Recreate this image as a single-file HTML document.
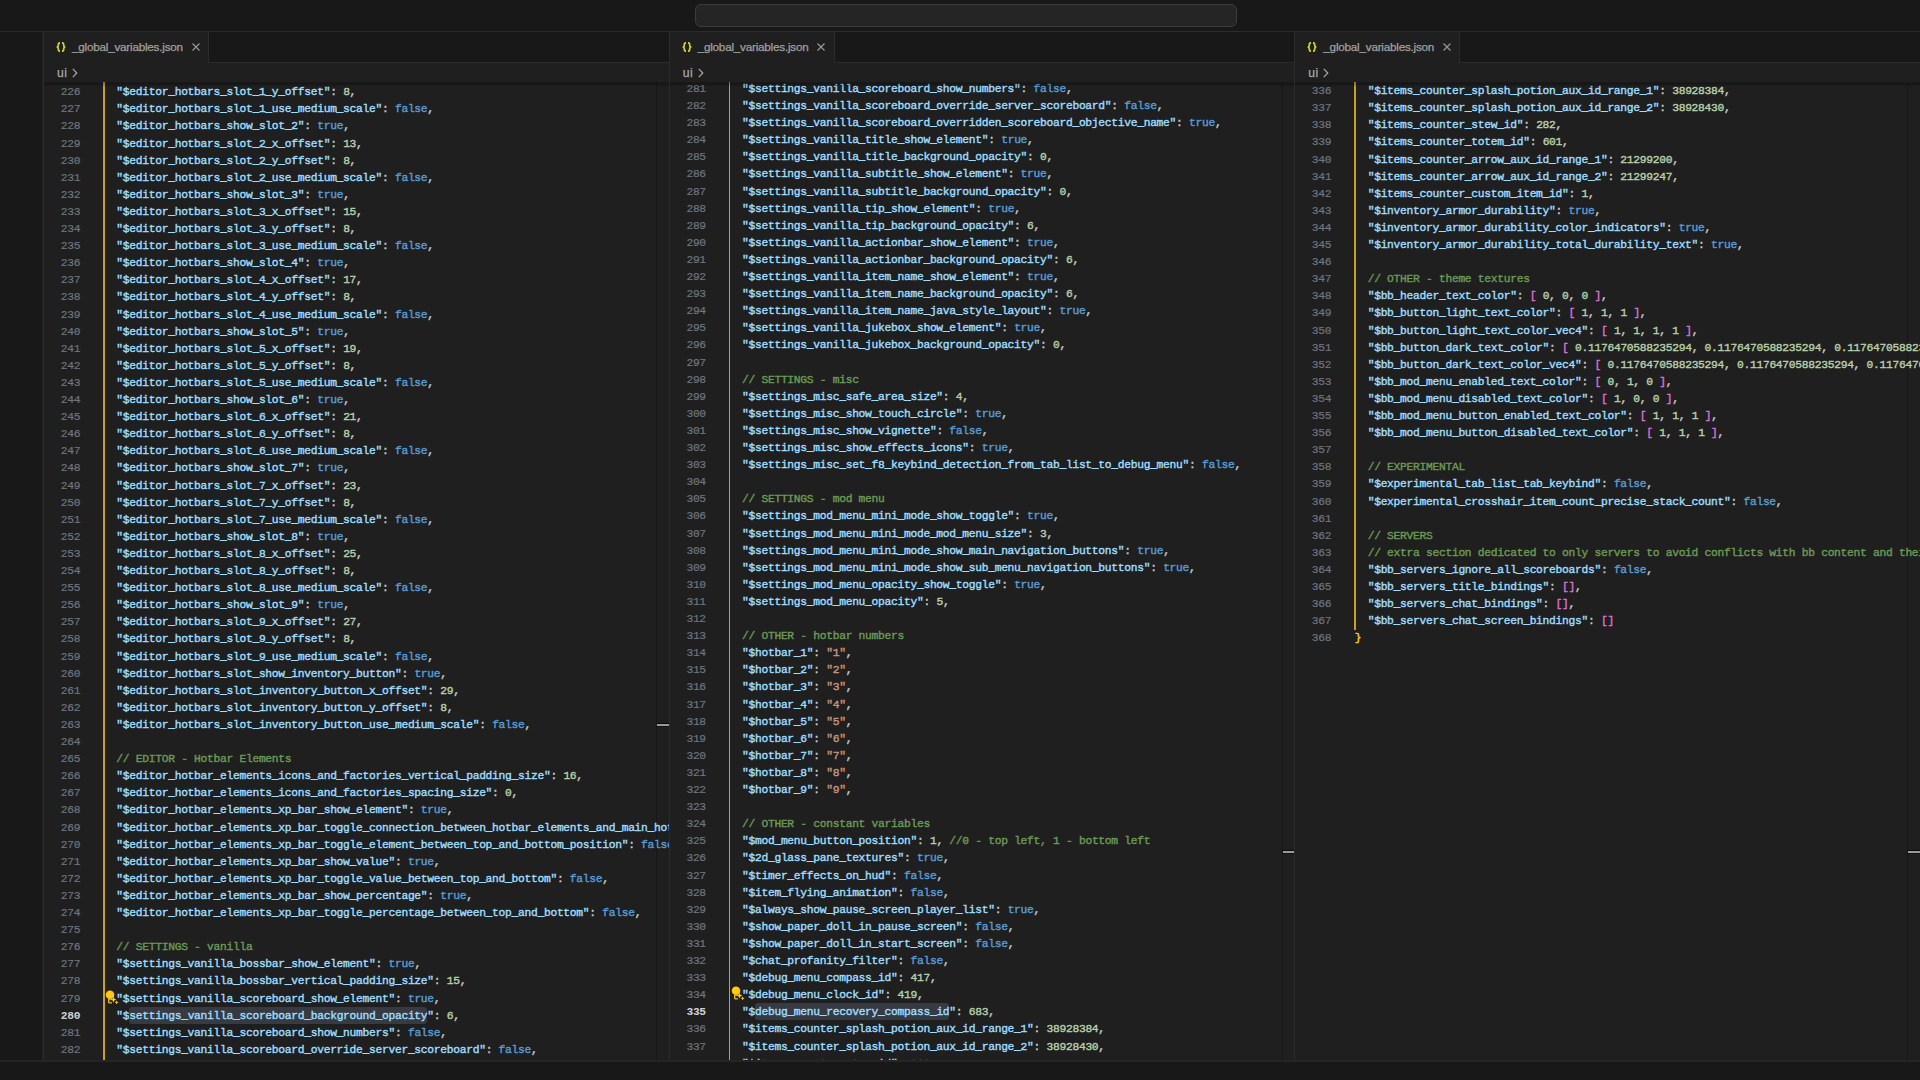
<!DOCTYPE html>
<html><head><meta charset="utf-8"><title>_global_variables.json</title>
<style>
*{margin:0;padding:0;box-sizing:border-box}
html,body{width:1920px;height:1080px;overflow:hidden;background:#181818}
body{position:relative;font-family:"Liberation Sans",sans-serif;color:#ccc}
i{font-style:normal}
.title{position:absolute;left:0;top:0;width:1920px;height:32px;background:#181818;border-bottom:1px solid #2b2b2b}
.cc{position:absolute;left:695px;top:4px;width:542px;height:23px;background:#252525;border:1px solid #3b3b3b;border-radius:6px}
.act{position:absolute;left:0;top:32px;width:43px;height:1028px;background:#181818;border-right:1px solid #222}
.status{position:absolute;left:0;top:1060px;width:1920px;height:20px;background:#181818;border-top:2px solid #252525}
.pane{position:absolute;top:32px;height:1028px;background:#1f1f1f;border-left:1px solid #2b2b2b;overflow:hidden}
.tabs{position:absolute;left:0;top:0;right:0;height:31px;background:#181818;border-bottom:1px solid #2b2b2b}
.tab{position:absolute;left:0;top:0;width:165px;height:31px;background:#1f1f1f;border-right:1px solid #2b2b2b}
.jic{position:absolute;left:12px;top:10px}
.tname{position:absolute;left:28px;top:0;height:29px;line-height:29px;font-size:11.7px;letter-spacing:-0.22px;color:#a0a0a0;-webkit-text-stroke:.25px;white-space:pre}
.xic{position:absolute;left:147.5px;top:11px}
.bc{position:absolute;left:0;top:31px;right:0;height:19px;background:#1f1f1f}
.bct{position:absolute;left:13px;top:0;height:21px;line-height:21px;letter-spacing:.5px;font-size:12.2px;color:#a9a9a9;-webkit-text-stroke:.25px}
.chev{position:absolute;left:28px;top:5px}
.ed{position:absolute;left:0;top:50px;right:0;bottom:0;background:#1f1f1f;overflow:hidden;font-family:"Liberation Mono",monospace;font-size:11.3px;letter-spacing:-0.301px;font-weight:normal;-webkit-text-stroke:0.4px;color:#ccc}
.row{position:absolute;left:0;right:0;height:17.1px;line-height:17.1px;white-space:pre}
.ln{position:absolute;left:0;top:0;width:36.2px;text-align:right;color:#6e7681;font-weight:normal;-webkit-text-stroke:.2px}
.ln.cur{color:#d0d0d0;font-weight:bold;-webkit-text-stroke:0}
.code{position:absolute;top:0}
.k{color:#9cdcfe}.t{color:#569cd6}.n{color:#b5cea8}.s{color:#ce9178}.c{color:#6a9955}.b1{color:#ffd700}.b2{color:#da70d6}
.hl{background:#373b41;border-radius:3px;padding:3px 0 2px}
.guide{position:absolute;left:59px;top:0;width:2px;background:#c9a40e}
.bulb{position:absolute;left:61px;top:-1px}
.ruler{position:absolute;right:0;top:0;bottom:0;width:12.6px;border-left:1px solid #171717}
.rm{position:absolute;left:0;right:0;height:2px;background:#9a9a9a;box-shadow:0 -1px 0 #0a0a0a,0 1px 0 #141414}
.shadow{position:absolute;left:0;right:0;top:0;height:6px;background:linear-gradient(rgba(0,0,0,.08) 0,rgba(0,0,0,.32) 1px,rgba(0,0,0,.28) 2px,rgba(0,0,0,0) 5px)}
</style></head><body>
<div class="title"><div class="cc"></div></div>
<div class="act"></div>
<div class="pane" style="left:43.00px;width:625.67px">
<div class="tabs"><div class="tab"><svg class="jic" viewBox="0 0 10 10" width="10" height="10"><path d="M4 .8C2.7 .8 2.3 1.4 2.3 2.4v1.3c0 .8-.5 1.3-1.7 1.3 1.2 0 1.7.5 1.7 1.3v1.3c0 1 .4 1.6 1.7 1.6M6 .8c1.3 0 1.7.6 1.7 1.6v1.3c0 .8.5 1.3 1.7 1.3-1.2 0-1.7.5-1.7 1.3v1.3c0 1-.4 1.6-1.7 1.6" fill="none" stroke="#d2d238" stroke-width="1.7"/></svg><span class="tname">_global_variables.json</span><svg class="xic" viewBox="0 0 8 8" width="8" height="8"><path d="M.5 .5l7 7M7.5 .5l-7 7" stroke="#9a9a9a" stroke-width="1.1" fill="none"/></svg></div></div>
<div class="bc"><span class="bct">ui</span><svg class="chev" viewBox="0 0 6 10" width="6" height="10"><path d="M.8 .8L4.8 5 .8 9.2" stroke="#a9a9a9" stroke-width="1.2" fill="none"/></svg></div>
<div class="ed">
<div class="ruler"><div class="rm" style="top:642px"></div></div>
<div class="guide" style="left:58.90px;width:2.20px;height:100%"></div>
<div class="row" style="top:2.27px"><span class="ln">226</span><span class="code" style="left:72.36px"><i class="k">"$editor_hotbars_slot_1_y_offset"</i>: <i class="n">8</i>,</span></div>
<div class="row" style="top:19.37px"><span class="ln">227</span><span class="code" style="left:72.36px"><i class="k">"$editor_hotbars_slot_1_use_medium_scale"</i>: <i class="t">false</i>,</span></div>
<div class="row" style="top:36.47px"><span class="ln">228</span><span class="code" style="left:72.36px"><i class="k">"$editor_hotbars_show_slot_2"</i>: <i class="t">true</i>,</span></div>
<div class="row" style="top:53.57px"><span class="ln">229</span><span class="code" style="left:72.36px"><i class="k">"$editor_hotbars_slot_2_x_offset"</i>: <i class="n">13</i>,</span></div>
<div class="row" style="top:70.67px"><span class="ln">230</span><span class="code" style="left:72.36px"><i class="k">"$editor_hotbars_slot_2_y_offset"</i>: <i class="n">8</i>,</span></div>
<div class="row" style="top:87.77px"><span class="ln">231</span><span class="code" style="left:72.36px"><i class="k">"$editor_hotbars_slot_2_use_medium_scale"</i>: <i class="t">false</i>,</span></div>
<div class="row" style="top:104.87px"><span class="ln">232</span><span class="code" style="left:72.36px"><i class="k">"$editor_hotbars_show_slot_3"</i>: <i class="t">true</i>,</span></div>
<div class="row" style="top:121.97px"><span class="ln">233</span><span class="code" style="left:72.36px"><i class="k">"$editor_hotbars_slot_3_x_offset"</i>: <i class="n">15</i>,</span></div>
<div class="row" style="top:139.07px"><span class="ln">234</span><span class="code" style="left:72.36px"><i class="k">"$editor_hotbars_slot_3_y_offset"</i>: <i class="n">8</i>,</span></div>
<div class="row" style="top:156.17px"><span class="ln">235</span><span class="code" style="left:72.36px"><i class="k">"$editor_hotbars_slot_3_use_medium_scale"</i>: <i class="t">false</i>,</span></div>
<div class="row" style="top:173.27px"><span class="ln">236</span><span class="code" style="left:72.36px"><i class="k">"$editor_hotbars_show_slot_4"</i>: <i class="t">true</i>,</span></div>
<div class="row" style="top:190.37px"><span class="ln">237</span><span class="code" style="left:72.36px"><i class="k">"$editor_hotbars_slot_4_x_offset"</i>: <i class="n">17</i>,</span></div>
<div class="row" style="top:207.47px"><span class="ln">238</span><span class="code" style="left:72.36px"><i class="k">"$editor_hotbars_slot_4_y_offset"</i>: <i class="n">8</i>,</span></div>
<div class="row" style="top:224.57px"><span class="ln">239</span><span class="code" style="left:72.36px"><i class="k">"$editor_hotbars_slot_4_use_medium_scale"</i>: <i class="t">false</i>,</span></div>
<div class="row" style="top:241.67px"><span class="ln">240</span><span class="code" style="left:72.36px"><i class="k">"$editor_hotbars_show_slot_5"</i>: <i class="t">true</i>,</span></div>
<div class="row" style="top:258.77px"><span class="ln">241</span><span class="code" style="left:72.36px"><i class="k">"$editor_hotbars_slot_5_x_offset"</i>: <i class="n">19</i>,</span></div>
<div class="row" style="top:275.87px"><span class="ln">242</span><span class="code" style="left:72.36px"><i class="k">"$editor_hotbars_slot_5_y_offset"</i>: <i class="n">8</i>,</span></div>
<div class="row" style="top:292.97px"><span class="ln">243</span><span class="code" style="left:72.36px"><i class="k">"$editor_hotbars_slot_5_use_medium_scale"</i>: <i class="t">false</i>,</span></div>
<div class="row" style="top:310.07px"><span class="ln">244</span><span class="code" style="left:72.36px"><i class="k">"$editor_hotbars_show_slot_6"</i>: <i class="t">true</i>,</span></div>
<div class="row" style="top:327.17px"><span class="ln">245</span><span class="code" style="left:72.36px"><i class="k">"$editor_hotbars_slot_6_x_offset"</i>: <i class="n">21</i>,</span></div>
<div class="row" style="top:344.27px"><span class="ln">246</span><span class="code" style="left:72.36px"><i class="k">"$editor_hotbars_slot_6_y_offset"</i>: <i class="n">8</i>,</span></div>
<div class="row" style="top:361.37px"><span class="ln">247</span><span class="code" style="left:72.36px"><i class="k">"$editor_hotbars_slot_6_use_medium_scale"</i>: <i class="t">false</i>,</span></div>
<div class="row" style="top:378.47px"><span class="ln">248</span><span class="code" style="left:72.36px"><i class="k">"$editor_hotbars_show_slot_7"</i>: <i class="t">true</i>,</span></div>
<div class="row" style="top:395.57px"><span class="ln">249</span><span class="code" style="left:72.36px"><i class="k">"$editor_hotbars_slot_7_x_offset"</i>: <i class="n">23</i>,</span></div>
<div class="row" style="top:412.67px"><span class="ln">250</span><span class="code" style="left:72.36px"><i class="k">"$editor_hotbars_slot_7_y_offset"</i>: <i class="n">8</i>,</span></div>
<div class="row" style="top:429.77px"><span class="ln">251</span><span class="code" style="left:72.36px"><i class="k">"$editor_hotbars_slot_7_use_medium_scale"</i>: <i class="t">false</i>,</span></div>
<div class="row" style="top:446.87px"><span class="ln">252</span><span class="code" style="left:72.36px"><i class="k">"$editor_hotbars_show_slot_8"</i>: <i class="t">true</i>,</span></div>
<div class="row" style="top:463.97px"><span class="ln">253</span><span class="code" style="left:72.36px"><i class="k">"$editor_hotbars_slot_8_x_offset"</i>: <i class="n">25</i>,</span></div>
<div class="row" style="top:481.07px"><span class="ln">254</span><span class="code" style="left:72.36px"><i class="k">"$editor_hotbars_slot_8_y_offset"</i>: <i class="n">8</i>,</span></div>
<div class="row" style="top:498.17px"><span class="ln">255</span><span class="code" style="left:72.36px"><i class="k">"$editor_hotbars_slot_8_use_medium_scale"</i>: <i class="t">false</i>,</span></div>
<div class="row" style="top:515.27px"><span class="ln">256</span><span class="code" style="left:72.36px"><i class="k">"$editor_hotbars_show_slot_9"</i>: <i class="t">true</i>,</span></div>
<div class="row" style="top:532.37px"><span class="ln">257</span><span class="code" style="left:72.36px"><i class="k">"$editor_hotbars_slot_9_x_offset"</i>: <i class="n">27</i>,</span></div>
<div class="row" style="top:549.47px"><span class="ln">258</span><span class="code" style="left:72.36px"><i class="k">"$editor_hotbars_slot_9_y_offset"</i>: <i class="n">8</i>,</span></div>
<div class="row" style="top:566.57px"><span class="ln">259</span><span class="code" style="left:72.36px"><i class="k">"$editor_hotbars_slot_9_use_medium_scale"</i>: <i class="t">false</i>,</span></div>
<div class="row" style="top:583.67px"><span class="ln">260</span><span class="code" style="left:72.36px"><i class="k">"$editor_hotbars_slot_show_inventory_button"</i>: <i class="t">true</i>,</span></div>
<div class="row" style="top:600.77px"><span class="ln">261</span><span class="code" style="left:72.36px"><i class="k">"$editor_hotbars_slot_inventory_button_x_offset"</i>: <i class="n">29</i>,</span></div>
<div class="row" style="top:617.87px"><span class="ln">262</span><span class="code" style="left:72.36px"><i class="k">"$editor_hotbars_slot_inventory_button_y_offset"</i>: <i class="n">8</i>,</span></div>
<div class="row" style="top:634.97px"><span class="ln">263</span><span class="code" style="left:72.36px"><i class="k">"$editor_hotbars_slot_inventory_button_use_medium_scale"</i>: <i class="t">false</i>,</span></div>
<div class="row" style="top:652.07px"><span class="ln">264</span></div>
<div class="row" style="top:669.17px"><span class="ln">265</span><span class="code" style="left:72.36px"><i class="c">// EDITOR - Hotbar Elements</i></span></div>
<div class="row" style="top:686.27px"><span class="ln">266</span><span class="code" style="left:72.36px"><i class="k">"$editor_hotbar_elements_icons_and_factories_vertical_padding_size"</i>: <i class="n">16</i>,</span></div>
<div class="row" style="top:703.37px"><span class="ln">267</span><span class="code" style="left:72.36px"><i class="k">"$editor_hotbar_elements_icons_and_factories_spacing_size"</i>: <i class="n">0</i>,</span></div>
<div class="row" style="top:720.47px"><span class="ln">268</span><span class="code" style="left:72.36px"><i class="k">"$editor_hotbar_elements_xp_bar_show_element"</i>: <i class="t">true</i>,</span></div>
<div class="row" style="top:737.57px"><span class="ln">269</span><span class="code" style="left:72.36px"><i class="k">"$editor_hotbar_elements_xp_bar_toggle_connection_between_hotbar_elements_and_main_hotbar"</i>: <i class="t">false</i>,</span></div>
<div class="row" style="top:754.67px"><span class="ln">270</span><span class="code" style="left:72.36px"><i class="k">"$editor_hotbar_elements_xp_bar_toggle_element_between_top_and_bottom_position"</i>: <i class="t">false</i>,</span></div>
<div class="row" style="top:771.77px"><span class="ln">271</span><span class="code" style="left:72.36px"><i class="k">"$editor_hotbar_elements_xp_bar_show_value"</i>: <i class="t">true</i>,</span></div>
<div class="row" style="top:788.87px"><span class="ln">272</span><span class="code" style="left:72.36px"><i class="k">"$editor_hotbar_elements_xp_bar_toggle_value_between_top_and_bottom"</i>: <i class="t">false</i>,</span></div>
<div class="row" style="top:805.97px"><span class="ln">273</span><span class="code" style="left:72.36px"><i class="k">"$editor_hotbar_elements_xp_bar_show_percentage"</i>: <i class="t">true</i>,</span></div>
<div class="row" style="top:823.07px"><span class="ln">274</span><span class="code" style="left:72.36px"><i class="k">"$editor_hotbar_elements_xp_bar_toggle_percentage_between_top_and_bottom"</i>: <i class="t">false</i>,</span></div>
<div class="row" style="top:840.17px"><span class="ln">275</span></div>
<div class="row" style="top:857.27px"><span class="ln">276</span><span class="code" style="left:72.36px"><i class="c">// SETTINGS - vanilla</i></span></div>
<div class="row" style="top:874.37px"><span class="ln">277</span><span class="code" style="left:72.36px"><i class="k">"$settings_vanilla_bossbar_show_element"</i>: <i class="t">true</i>,</span></div>
<div class="row" style="top:891.47px"><span class="ln">278</span><span class="code" style="left:72.36px"><i class="k">"$settings_vanilla_bossbar_vertical_padding_size"</i>: <i class="n">15</i>,</span></div>
<div class="row" style="top:908.57px"><span class="ln">279</span><span class="code" style="left:72.36px"><i class="k">"$settings_vanilla_scoreboard_show_element"</i>: <i class="t">true</i>,</span><svg class="bulb" viewBox="0 0 14 15" width="14" height="15"><circle cx="5" cy="4.7" r="4.3" fill="#ffcc00"/><path d="M3 8.6h4v1.2H4.4v2.4H7v1.2H4.2c-.8 0-1.2-.5-1.2-1.3z" fill="#f0b800"/><path d="M8.5 6.8l.9 1.9 1.9.9-1.9.9-.9 1.9-.9-1.9-1.9-.9 1.9-.9z" fill="#ffcc00"/><path d="M11.6 10.4l.65 1.25 1.25.65-1.25.65-.65 1.25-.65-1.25-1.25-.65 1.25-.65z" fill="#ffcc00"/></svg></div>
<div class="row" style="top:925.67px"><span class="ln cur">280</span><span class="code" style="left:72.36px"><i class="k">"$<span class="hl">settings_vanilla_scoreboard_background_opacity</span>"</i>: <i class="n">6</i>,</span></div>
<div class="row" style="top:942.77px"><span class="ln">281</span><span class="code" style="left:72.36px"><i class="k">"$settings_vanilla_scoreboard_show_numbers"</i>: <i class="t">false</i>,</span></div>
<div class="row" style="top:959.87px"><span class="ln">282</span><span class="code" style="left:72.36px"><i class="k">"$settings_vanilla_scoreboard_override_server_scoreboard"</i>: <i class="t">false</i>,</span></div>
<div class="row" style="top:976.97px"><span class="ln">283</span><span class="code" style="left:72.36px"><i class="k">"$settings_vanilla_scoreboard_overridden_scoreboard_objective_name"</i>: <i class="t">true</i>,</span></div>
<div class="shadow"></div>
</div>
</div>
<div class="pane" style="left:668.67px;width:625.66px">
<div class="tabs"><div class="tab"><svg class="jic" viewBox="0 0 10 10" width="10" height="10"><path d="M4 .8C2.7 .8 2.3 1.4 2.3 2.4v1.3c0 .8-.5 1.3-1.7 1.3 1.2 0 1.7.5 1.7 1.3v1.3c0 1 .4 1.6 1.7 1.6M6 .8c1.3 0 1.7.6 1.7 1.6v1.3c0 .8.5 1.3 1.7 1.3-1.2 0-1.7.5-1.7 1.3v1.3c0 1-.4 1.6-1.7 1.6" fill="none" stroke="#d2d238" stroke-width="1.7"/></svg><span class="tname">_global_variables.json</span><svg class="xic" viewBox="0 0 8 8" width="8" height="8"><path d="M.5 .5l7 7M7.5 .5l-7 7" stroke="#9a9a9a" stroke-width="1.1" fill="none"/></svg></div></div>
<div class="bc"><span class="bct">ui</span><svg class="chev" viewBox="0 0 6 10" width="6" height="10"><path d="M.8 .8L4.8 5 .8 9.2" stroke="#a9a9a9" stroke-width="1.2" fill="none"/></svg></div>
<div class="ed">
<div class="ruler"><div class="rm" style="top:769px"></div></div>
<div class="guide" style="left:59.08px;width:1.60px;height:100%"></div>
<div class="row" style="top:-1.03px"><span class="ln">281</span><span class="code" style="left:72.36px"><i class="k">"$settings_vanilla_scoreboard_show_numbers"</i>: <i class="t">false</i>,</span></div>
<div class="row" style="top:16.07px"><span class="ln">282</span><span class="code" style="left:72.36px"><i class="k">"$settings_vanilla_scoreboard_override_server_scoreboard"</i>: <i class="t">false</i>,</span></div>
<div class="row" style="top:33.17px"><span class="ln">283</span><span class="code" style="left:72.36px"><i class="k">"$settings_vanilla_scoreboard_overridden_scoreboard_objective_name"</i>: <i class="t">true</i>,</span></div>
<div class="row" style="top:50.27px"><span class="ln">284</span><span class="code" style="left:72.36px"><i class="k">"$settings_vanilla_title_show_element"</i>: <i class="t">true</i>,</span></div>
<div class="row" style="top:67.37px"><span class="ln">285</span><span class="code" style="left:72.36px"><i class="k">"$settings_vanilla_title_background_opacity"</i>: <i class="n">0</i>,</span></div>
<div class="row" style="top:84.47px"><span class="ln">286</span><span class="code" style="left:72.36px"><i class="k">"$settings_vanilla_subtitle_show_element"</i>: <i class="t">true</i>,</span></div>
<div class="row" style="top:101.57px"><span class="ln">287</span><span class="code" style="left:72.36px"><i class="k">"$settings_vanilla_subtitle_background_opacity"</i>: <i class="n">0</i>,</span></div>
<div class="row" style="top:118.67px"><span class="ln">288</span><span class="code" style="left:72.36px"><i class="k">"$settings_vanilla_tip_show_element"</i>: <i class="t">true</i>,</span></div>
<div class="row" style="top:135.77px"><span class="ln">289</span><span class="code" style="left:72.36px"><i class="k">"$settings_vanilla_tip_background_opacity"</i>: <i class="n">6</i>,</span></div>
<div class="row" style="top:152.87px"><span class="ln">290</span><span class="code" style="left:72.36px"><i class="k">"$settings_vanilla_actionbar_show_element"</i>: <i class="t">true</i>,</span></div>
<div class="row" style="top:169.97px"><span class="ln">291</span><span class="code" style="left:72.36px"><i class="k">"$settings_vanilla_actionbar_background_opacity"</i>: <i class="n">6</i>,</span></div>
<div class="row" style="top:187.07px"><span class="ln">292</span><span class="code" style="left:72.36px"><i class="k">"$settings_vanilla_item_name_show_element"</i>: <i class="t">true</i>,</span></div>
<div class="row" style="top:204.17px"><span class="ln">293</span><span class="code" style="left:72.36px"><i class="k">"$settings_vanilla_item_name_background_opacity"</i>: <i class="n">6</i>,</span></div>
<div class="row" style="top:221.27px"><span class="ln">294</span><span class="code" style="left:72.36px"><i class="k">"$settings_vanilla_item_name_java_style_layout"</i>: <i class="t">true</i>,</span></div>
<div class="row" style="top:238.37px"><span class="ln">295</span><span class="code" style="left:72.36px"><i class="k">"$settings_vanilla_jukebox_show_element"</i>: <i class="t">true</i>,</span></div>
<div class="row" style="top:255.47px"><span class="ln">296</span><span class="code" style="left:72.36px"><i class="k">"$settings_vanilla_jukebox_background_opacity"</i>: <i class="n">0</i>,</span></div>
<div class="row" style="top:272.57px"><span class="ln">297</span></div>
<div class="row" style="top:289.67px"><span class="ln">298</span><span class="code" style="left:72.36px"><i class="c">// SETTINGS - misc</i></span></div>
<div class="row" style="top:306.77px"><span class="ln">299</span><span class="code" style="left:72.36px"><i class="k">"$settings_misc_safe_area_size"</i>: <i class="n">4</i>,</span></div>
<div class="row" style="top:323.87px"><span class="ln">300</span><span class="code" style="left:72.36px"><i class="k">"$settings_misc_show_touch_circle"</i>: <i class="t">true</i>,</span></div>
<div class="row" style="top:340.97px"><span class="ln">301</span><span class="code" style="left:72.36px"><i class="k">"$settings_misc_show_vignette"</i>: <i class="t">false</i>,</span></div>
<div class="row" style="top:358.07px"><span class="ln">302</span><span class="code" style="left:72.36px"><i class="k">"$settings_misc_show_effects_icons"</i>: <i class="t">true</i>,</span></div>
<div class="row" style="top:375.17px"><span class="ln">303</span><span class="code" style="left:72.36px"><i class="k">"$settings_misc_set_f8_keybind_detection_from_tab_list_to_debug_menu"</i>: <i class="t">false</i>,</span></div>
<div class="row" style="top:392.27px"><span class="ln">304</span></div>
<div class="row" style="top:409.37px"><span class="ln">305</span><span class="code" style="left:72.36px"><i class="c">// SETTINGS - mod menu</i></span></div>
<div class="row" style="top:426.47px"><span class="ln">306</span><span class="code" style="left:72.36px"><i class="k">"$settings_mod_menu_mini_mode_show_toggle"</i>: <i class="t">true</i>,</span></div>
<div class="row" style="top:443.57px"><span class="ln">307</span><span class="code" style="left:72.36px"><i class="k">"$settings_mod_menu_mini_mode_mod_menu_size"</i>: <i class="n">3</i>,</span></div>
<div class="row" style="top:460.67px"><span class="ln">308</span><span class="code" style="left:72.36px"><i class="k">"$settings_mod_menu_mini_mode_show_main_navigation_buttons"</i>: <i class="t">true</i>,</span></div>
<div class="row" style="top:477.77px"><span class="ln">309</span><span class="code" style="left:72.36px"><i class="k">"$settings_mod_menu_mini_mode_show_sub_menu_navigation_buttons"</i>: <i class="t">true</i>,</span></div>
<div class="row" style="top:494.87px"><span class="ln">310</span><span class="code" style="left:72.36px"><i class="k">"$settings_mod_menu_opacity_show_toggle"</i>: <i class="t">true</i>,</span></div>
<div class="row" style="top:511.97px"><span class="ln">311</span><span class="code" style="left:72.36px"><i class="k">"$settings_mod_menu_opacity"</i>: <i class="n">5</i>,</span></div>
<div class="row" style="top:529.07px"><span class="ln">312</span></div>
<div class="row" style="top:546.17px"><span class="ln">313</span><span class="code" style="left:72.36px"><i class="c">// OTHER - hotbar numbers</i></span></div>
<div class="row" style="top:563.27px"><span class="ln">314</span><span class="code" style="left:72.36px"><i class="k">"$hotbar_1"</i>: <i class="s">"1"</i>,</span></div>
<div class="row" style="top:580.37px"><span class="ln">315</span><span class="code" style="left:72.36px"><i class="k">"$hotbar_2"</i>: <i class="s">"2"</i>,</span></div>
<div class="row" style="top:597.47px"><span class="ln">316</span><span class="code" style="left:72.36px"><i class="k">"$hotbar_3"</i>: <i class="s">"3"</i>,</span></div>
<div class="row" style="top:614.57px"><span class="ln">317</span><span class="code" style="left:72.36px"><i class="k">"$hotbar_4"</i>: <i class="s">"4"</i>,</span></div>
<div class="row" style="top:631.67px"><span class="ln">318</span><span class="code" style="left:72.36px"><i class="k">"$hotbar_5"</i>: <i class="s">"5"</i>,</span></div>
<div class="row" style="top:648.77px"><span class="ln">319</span><span class="code" style="left:72.36px"><i class="k">"$hotbar_6"</i>: <i class="s">"6"</i>,</span></div>
<div class="row" style="top:665.87px"><span class="ln">320</span><span class="code" style="left:72.36px"><i class="k">"$hotbar_7"</i>: <i class="s">"7"</i>,</span></div>
<div class="row" style="top:682.97px"><span class="ln">321</span><span class="code" style="left:72.36px"><i class="k">"$hotbar_8"</i>: <i class="s">"8"</i>,</span></div>
<div class="row" style="top:700.07px"><span class="ln">322</span><span class="code" style="left:72.36px"><i class="k">"$hotbar_9"</i>: <i class="s">"9"</i>,</span></div>
<div class="row" style="top:717.17px"><span class="ln">323</span></div>
<div class="row" style="top:734.27px"><span class="ln">324</span><span class="code" style="left:72.36px"><i class="c">// OTHER - constant variables</i></span></div>
<div class="row" style="top:751.37px"><span class="ln">325</span><span class="code" style="left:72.36px"><i class="k">"$mod_menu_button_position"</i>: <i class="n">1</i>, <i class="c">//0 - top left, 1 - bottom left</i></span></div>
<div class="row" style="top:768.47px"><span class="ln">326</span><span class="code" style="left:72.36px"><i class="k">"$2d_glass_pane_textures"</i>: <i class="t">true</i>,</span></div>
<div class="row" style="top:785.57px"><span class="ln">327</span><span class="code" style="left:72.36px"><i class="k">"$timer_effects_on_hud"</i>: <i class="t">false</i>,</span></div>
<div class="row" style="top:802.67px"><span class="ln">328</span><span class="code" style="left:72.36px"><i class="k">"$item_flying_animation"</i>: <i class="t">false</i>,</span></div>
<div class="row" style="top:819.77px"><span class="ln">329</span><span class="code" style="left:72.36px"><i class="k">"$always_show_pause_screen_player_list"</i>: <i class="t">true</i>,</span></div>
<div class="row" style="top:836.87px"><span class="ln">330</span><span class="code" style="left:72.36px"><i class="k">"$show_paper_doll_in_pause_screen"</i>: <i class="t">false</i>,</span></div>
<div class="row" style="top:853.97px"><span class="ln">331</span><span class="code" style="left:72.36px"><i class="k">"$show_paper_doll_in_start_screen"</i>: <i class="t">false</i>,</span></div>
<div class="row" style="top:871.07px"><span class="ln">332</span><span class="code" style="left:72.36px"><i class="k">"$chat_profanity_filter"</i>: <i class="t">false</i>,</span></div>
<div class="row" style="top:888.17px"><span class="ln">333</span><span class="code" style="left:72.36px"><i class="k">"$debug_menu_compass_id"</i>: <i class="n">417</i>,</span></div>
<div class="row" style="top:905.27px"><span class="ln">334</span><span class="code" style="left:72.36px"><i class="k">"$debug_menu_clock_id"</i>: <i class="n">419</i>,</span><svg class="bulb" viewBox="0 0 14 15" width="14" height="15"><circle cx="5" cy="4.7" r="4.3" fill="#ffcc00"/><path d="M3 8.6h4v1.2H4.4v2.4H7v1.2H4.2c-.8 0-1.2-.5-1.2-1.3z" fill="#f0b800"/><path d="M8.5 6.8l.9 1.9 1.9.9-1.9.9-.9 1.9-.9-1.9-1.9-.9 1.9-.9z" fill="#ffcc00"/><path d="M11.6 10.4l.65 1.25 1.25.65-1.25.65-.65 1.25-.65-1.25-1.25-.65 1.25-.65z" fill="#ffcc00"/></svg></div>
<div class="row" style="top:922.37px"><span class="ln cur">335</span><span class="code" style="left:72.36px"><i class="k">"$<span class="hl">debug_menu_recovery_compass_id</span>"</i>: <i class="n">683</i>,</span></div>
<div class="row" style="top:939.47px"><span class="ln">336</span><span class="code" style="left:72.36px"><i class="k">"$items_counter_splash_potion_aux_id_range_1"</i>: <i class="n">38928384</i>,</span></div>
<div class="row" style="top:956.57px"><span class="ln">337</span><span class="code" style="left:72.36px"><i class="k">"$items_counter_splash_potion_aux_id_range_2"</i>: <i class="n">38928430</i>,</span></div>
<div class="row" style="top:973.67px"><span class="ln">338</span><span class="code" style="left:72.36px"><i class="k">"$items_counter_stew_id"</i>: <i class="n">282</i>,</span></div>
<div class="shadow"></div>
</div>
</div>
<div class="pane" style="left:1294.33px;width:625.67px">
<div class="tabs"><div class="tab"><svg class="jic" viewBox="0 0 10 10" width="10" height="10"><path d="M4 .8C2.7 .8 2.3 1.4 2.3 2.4v1.3c0 .8-.5 1.3-1.7 1.3 1.2 0 1.7.5 1.7 1.3v1.3c0 1 .4 1.6 1.7 1.6M6 .8c1.3 0 1.7.6 1.7 1.6v1.3c0 .8.5 1.3 1.7 1.3-1.2 0-1.7.5-1.7 1.3v1.3c0 1-.4 1.6-1.7 1.6" fill="none" stroke="#d2d238" stroke-width="1.7"/></svg><span class="tname">_global_variables.json</span><svg class="xic" viewBox="0 0 8 8" width="8" height="8"><path d="M.5 .5l7 7M7.5 .5l-7 7" stroke="#9a9a9a" stroke-width="1.1" fill="none"/></svg></div></div>
<div class="bc"><span class="bct">ui</span><svg class="chev" viewBox="0 0 6 10" width="6" height="10"><path d="M.8 .8L4.8 5 .8 9.2" stroke="#a9a9a9" stroke-width="1.2" fill="none"/></svg></div>
<div class="ed">
<div class="ruler"><div class="rm" style="top:769px"></div></div>
<div class="guide" style="left:58.87px;width:2.10px;height:547.70px"></div>
<div class="row" style="top:1.17px"><span class="ln" style="width:35.8px">336</span><span class="code" style="left:72.36px"><i class="k">"$items_counter_splash_potion_aux_id_range_1"</i>: <i class="n">38928384</i>,</span></div>
<div class="row" style="top:18.27px"><span class="ln" style="width:35.8px">337</span><span class="code" style="left:72.36px"><i class="k">"$items_counter_splash_potion_aux_id_range_2"</i>: <i class="n">38928430</i>,</span></div>
<div class="row" style="top:35.37px"><span class="ln" style="width:35.8px">338</span><span class="code" style="left:72.36px"><i class="k">"$items_counter_stew_id"</i>: <i class="n">282</i>,</span></div>
<div class="row" style="top:52.47px"><span class="ln" style="width:35.8px">339</span><span class="code" style="left:72.36px"><i class="k">"$items_counter_totem_id"</i>: <i class="n">601</i>,</span></div>
<div class="row" style="top:69.57px"><span class="ln" style="width:35.8px">340</span><span class="code" style="left:72.36px"><i class="k">"$items_counter_arrow_aux_id_range_1"</i>: <i class="n">21299200</i>,</span></div>
<div class="row" style="top:86.67px"><span class="ln" style="width:35.8px">341</span><span class="code" style="left:72.36px"><i class="k">"$items_counter_arrow_aux_id_range_2"</i>: <i class="n">21299247</i>,</span></div>
<div class="row" style="top:103.77px"><span class="ln" style="width:35.8px">342</span><span class="code" style="left:72.36px"><i class="k">"$items_counter_custom_item_id"</i>: <i class="n">1</i>,</span></div>
<div class="row" style="top:120.87px"><span class="ln" style="width:35.8px">343</span><span class="code" style="left:72.36px"><i class="k">"$inventory_armor_durability"</i>: <i class="t">true</i>,</span></div>
<div class="row" style="top:137.97px"><span class="ln" style="width:35.8px">344</span><span class="code" style="left:72.36px"><i class="k">"$inventory_armor_durability_color_indicators"</i>: <i class="t">true</i>,</span></div>
<div class="row" style="top:155.07px"><span class="ln" style="width:35.8px">345</span><span class="code" style="left:72.36px"><i class="k">"$inventory_armor_durability_total_durability_text"</i>: <i class="t">true</i>,</span></div>
<div class="row" style="top:172.17px"><span class="ln" style="width:35.8px">346</span></div>
<div class="row" style="top:189.27px"><span class="ln" style="width:35.8px">347</span><span class="code" style="left:72.36px"><i class="c">// OTHER - theme textures</i></span></div>
<div class="row" style="top:206.37px"><span class="ln" style="width:35.8px">348</span><span class="code" style="left:72.36px"><i class="k">"$bb_header_text_color"</i>: <i class="b2">[</i> <i class="n">0</i>, <i class="n">0</i>, <i class="n">0</i> <i class="b2">]</i>,</span></div>
<div class="row" style="top:223.47px"><span class="ln" style="width:35.8px">349</span><span class="code" style="left:72.36px"><i class="k">"$bb_button_light_text_color"</i>: <i class="b2">[</i> <i class="n">1</i>, <i class="n">1</i>, <i class="n">1</i> <i class="b2">]</i>,</span></div>
<div class="row" style="top:240.57px"><span class="ln" style="width:35.8px">350</span><span class="code" style="left:72.36px"><i class="k">"$bb_button_light_text_color_vec4"</i>: <i class="b2">[</i> <i class="n">1</i>, <i class="n">1</i>, <i class="n">1</i>, <i class="n">1</i> <i class="b2">]</i>,</span></div>
<div class="row" style="top:257.67px"><span class="ln" style="width:35.8px">351</span><span class="code" style="left:72.36px"><i class="k">"$bb_button_dark_text_color"</i>: <i class="b2">[</i> <i class="n">0.1176470588235294</i>, <i class="n">0.1176470588235294</i>, <i class="n">0.1176470588235294</i> <i class="b2">]</i>,</span></div>
<div class="row" style="top:274.77px"><span class="ln" style="width:35.8px">352</span><span class="code" style="left:72.36px"><i class="k">"$bb_button_dark_text_color_vec4"</i>: <i class="b2">[</i> <i class="n">0.1176470588235294</i>, <i class="n">0.1176470588235294</i>, <i class="n">0.1176470588235294</i>, <i class="n">1</i> <i class="b2">]</i>,</span></div>
<div class="row" style="top:291.87px"><span class="ln" style="width:35.8px">353</span><span class="code" style="left:72.36px"><i class="k">"$bb_mod_menu_enabled_text_color"</i>: <i class="b2">[</i> <i class="n">0</i>, <i class="n">1</i>, <i class="n">0</i> <i class="b2">]</i>,</span></div>
<div class="row" style="top:308.97px"><span class="ln" style="width:35.8px">354</span><span class="code" style="left:72.36px"><i class="k">"$bb_mod_menu_disabled_text_color"</i>: <i class="b2">[</i> <i class="n">1</i>, <i class="n">0</i>, <i class="n">0</i> <i class="b2">]</i>,</span></div>
<div class="row" style="top:326.07px"><span class="ln" style="width:35.8px">355</span><span class="code" style="left:72.36px"><i class="k">"$bb_mod_menu_button_enabled_text_color"</i>: <i class="b2">[</i> <i class="n">1</i>, <i class="n">1</i>, <i class="n">1</i> <i class="b2">]</i>,</span></div>
<div class="row" style="top:343.17px"><span class="ln" style="width:35.8px">356</span><span class="code" style="left:72.36px"><i class="k">"$bb_mod_menu_button_disabled_text_color"</i>: <i class="b2">[</i> <i class="n">1</i>, <i class="n">1</i>, <i class="n">1</i> <i class="b2">]</i>,</span></div>
<div class="row" style="top:360.27px"><span class="ln" style="width:35.8px">357</span></div>
<div class="row" style="top:377.37px"><span class="ln" style="width:35.8px">358</span><span class="code" style="left:72.36px"><i class="c">// EXPERIMENTAL</i></span></div>
<div class="row" style="top:394.47px"><span class="ln" style="width:35.8px">359</span><span class="code" style="left:72.36px"><i class="k">"$experimental_tab_list_tab_keybind"</i>: <i class="t">false</i>,</span></div>
<div class="row" style="top:411.57px"><span class="ln" style="width:35.8px">360</span><span class="code" style="left:72.36px"><i class="k">"$experimental_crosshair_item_count_precise_stack_count"</i>: <i class="t">false</i>,</span></div>
<div class="row" style="top:428.67px"><span class="ln" style="width:35.8px">361</span></div>
<div class="row" style="top:445.77px"><span class="ln" style="width:35.8px">362</span><span class="code" style="left:72.36px"><i class="c">// SERVERS</i></span></div>
<div class="row" style="top:462.87px"><span class="ln" style="width:35.8px">363</span><span class="code" style="left:72.36px"><i class="c">// extra section dedicated to only servers to avoid conflicts with bb content and their bindings</i></span></div>
<div class="row" style="top:479.97px"><span class="ln" style="width:35.8px">364</span><span class="code" style="left:72.36px"><i class="k">"$bb_servers_ignore_all_scoreboards"</i>: <i class="t">false</i>,</span></div>
<div class="row" style="top:497.07px"><span class="ln" style="width:35.8px">365</span><span class="code" style="left:72.36px"><i class="k">"$bb_servers_title_bindings"</i>: <i class="b2">[</i><i class="b2">]</i>,</span></div>
<div class="row" style="top:514.17px"><span class="ln" style="width:35.8px">366</span><span class="code" style="left:72.36px"><i class="k">"$bb_servers_chat_bindings"</i>: <i class="b2">[</i><i class="b2">]</i>,</span></div>
<div class="row" style="top:531.27px"><span class="ln" style="width:35.8px">367</span><span class="code" style="left:72.36px"><i class="k">"$bb_servers_chat_screen_bindings"</i>: <i class="b2">[</i><i class="b2">]</i></span></div>
<div class="row" style="top:548.37px"><span class="ln" style="width:35.8px">368</span><span class="code" style="left:59.40px"><i class="b1">}</i></span></div>
<div class="shadow"></div>
</div>
</div>
<div class="status"></div>
</body></html>
